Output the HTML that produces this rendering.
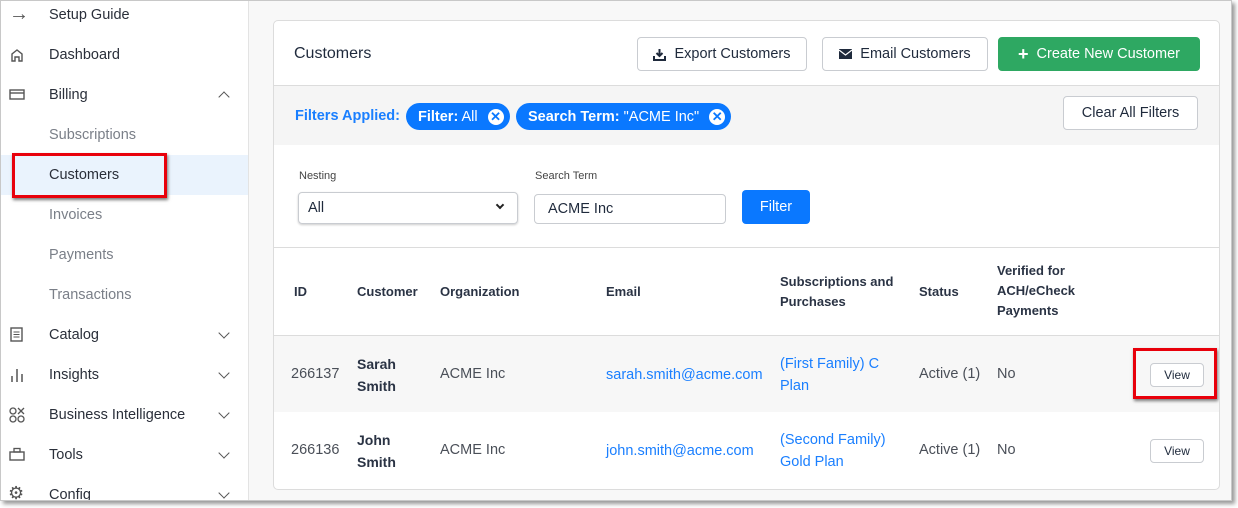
<!DOCTYPE html>
<html><head><style>
*{box-sizing:border-box;margin:0;padding:0}
body{width:1238px;height:508px;background:#fff;font-family:"Liberation Sans",sans-serif;position:relative;overflow:hidden;color:#1f2a3c}
.a{position:absolute;white-space:nowrap}
.frame{position:absolute;left:0;top:0;width:1232px;height:501px;border:1px solid #c8c8c8;box-shadow:3px 3px 4px #999;overflow:hidden;background:#f8f8f8}
.side{position:absolute;left:-1px;top:0;width:249px;height:502px;background:#fff;border-right:1px solid #e3e3e3}
.nav{font-size:14.5px;color:#2a2f3a}
.sub{font-size:14.5px;color:#7a7f88}
.chev{position:absolute;width:8px;height:8px;border-right:1.5px solid #555;border-bottom:1.5px solid #555;transform:rotate(45deg)}
.card{position:absolute;left:272px;top:19px;width:947px;height:470px;background:#fff;border:1px solid #dcdcdc;border-radius:5px;overflow:hidden}
.btn{position:absolute;border:1px solid #c9ccd1;border-radius:4px;background:#fff;font-size:14.5px;color:#1f2a3c;display:flex;align-items:center;justify-content:center;gap:8px}
.th{font-size:13px;font-weight:bold;color:#2a3344;line-height:20px}
.td{font-size:14.5px;color:#4a4f58}
.lnk{font-size:14.5px;color:#1a7fff;line-height:22px}
.pill{position:absolute;background:#0a78ff;color:#fff;border-radius:14px;height:27px;top:102px;font-size:14.5px;display:flex;align-items:center;padding:0 6px 0 12px;gap:10px}
.x{width:16px;height:16px;border-radius:50%;background:#fff;color:#0a78ff;font-size:13px;font-weight:bold;display:flex;align-items:center;justify-content:center;line-height:1}
</style></head><body>
<div class="frame">
<div class="side">
 <div class="a nav" style="left:9px;top:2px;font-size:20px;color:#555">→</div>
 <div class="a nav" style="left:49px;top:6px">Setup Guide</div>
 <svg class="a" style="left:10px;top:47px" width="14" height="14" viewBox="0 0 14 14"><path d="M2 13V6L7 2l5 4v7H9V9H5v4z" fill="none" stroke="#555" stroke-width="1.4"/></svg>
 <div class="a nav" style="left:49px;top:46px">Dashboard</div>
 <svg class="a" style="left:9px;top:88px" width="16" height="12"><rect x="1" y="1" width="14" height="9" fill="none" stroke="#555" stroke-width="1.4"/><line x1="1" y1="4" x2="15" y2="4" stroke="#555" stroke-width="1.4"/></svg>
 <div class="a nav" style="left:49px;top:86px">Billing</div>
 <div class="chev" style="left:220px;top:92px;transform:rotate(225deg)"></div>
 <div class="a sub" style="left:49px;top:126px">Subscriptions</div>
 <div class="a" style="left:0;top:154px;width:248px;height:40px;background:#eaf3fd"></div>
 <div class="a" style="left:12px;top:152px;width:155px;height:45px;border:3px solid #e8000b;box-shadow:1px 2px 3px #777"></div>
 <div class="a nav" style="left:49px;top:166px">Customers</div>
 <div class="a sub" style="left:49px;top:206px">Invoices</div>
 <div class="a sub" style="left:49px;top:246px">Payments</div>
 <div class="a sub" style="left:49px;top:286px">Transactions</div>
 <svg class="a" style="left:10px;top:326px" width="13" height="15"><rect x="1" y="1" width="11" height="13" fill="none" stroke="#555" stroke-width="1.4"/><path d="M3.5 5h6M3.5 7.5h6M3.5 10h6" stroke="#555"/></svg>
 <div class="a nav" style="left:49px;top:326px">Catalog</div>
 <div class="chev" style="left:220px;top:328px"></div>
 <svg class="a" style="left:10px;top:366px" width="14" height="15"><path d="M2 15V9M7 15V2M12 15V7" stroke="#555" stroke-width="1.5"/></svg>
 <div class="a nav" style="left:49px;top:366px">Insights</div>
 <div class="chev" style="left:220px;top:368px"></div>
 <svg class="a" style="left:9px;top:406px" width="16" height="16"><circle cx="4" cy="4" r="3" fill="none" stroke="#555" stroke-width="1.3"/><circle cx="12" cy="12" r="3" fill="none" stroke="#555" stroke-width="1.3"/><circle cx="4" cy="12" r="3" fill="none" stroke="#555" stroke-width="1.3"/><path d="M9 1l6 6M15 1l-6 6" stroke="#555" stroke-width="1.3"/></svg>
 <div class="a nav" style="left:49px;top:406px">Business Intelligence</div>
 <div class="chev" style="left:220px;top:408px"></div>
 <svg class="a" style="left:9px;top:446px" width="16" height="14"><rect x="1" y="5" width="14" height="8" fill="none" stroke="#555" stroke-width="1.4"/><rect x="5" y="1.5" width="6" height="3.5" fill="none" stroke="#555" stroke-width="1.3"/></svg>
 <div class="a nav" style="left:49px;top:446px">Tools</div>
 <div class="chev" style="left:220px;top:448px"></div>
 <div class="a" style="left:8px;top:482px;font-size:18px;color:#555">⚙</div>
 <div class="a nav" style="left:49px;top:486px">Config</div>
 <div class="chev" style="left:220px;top:488px"></div>
</div>
<div class="card">
 <div class="a" style="left:20px;top:24px;font-size:16px;color:#1f2a3c">Customers</div>
 <div class="btn" style="left:363px;top:16px;width:170px;height:34px"><svg width="13" height="13"><path d="M6.5 1v7M3.5 5l3 3 3-3" stroke="#1f2a3c" stroke-width="2" fill="none"/><path d="M1 8v4h11V8" stroke="#1f2a3c" stroke-width="2" fill="none"/></svg>Export Customers</div>
 <div class="btn" style="left:548px;top:16px;width:166px;height:34px"><svg width="13" height="10"><rect width="13" height="10" fill="#1f2a3c"/><path d="M0 1l6.5 5L13 1" stroke="#fff" stroke-width="1.2" fill="none"/></svg>Email Customers</div>
 <div class="btn" style="left:724px;top:16px;width:202px;height:34px;background:#2ea862;border-color:#2ea862;color:#fff"><span style="font-size:18px;font-weight:bold">+</span>Create New Customer</div>
 <div class="a" style="left:0;top:64px;width:947px;height:60px;background:#f5f5f5;border-top:1px solid #dcdcdc"></div>
 <div class="a" style="left:21px;top:87px;font-size:14.5px;font-weight:bold;color:#1a7fff">Filters Applied:</div>
 <div class="pill" style="left:132px;top:82px"><span><b>Filter:</b> All</span><span class="x">✕</span></div>
 <div class="pill" style="left:242px;top:82px"><span><b>Search Term:</b> "ACME Inc"</span><span class="x">✕</span></div>
 <div class="btn" style="left:789px;top:75px;width:135px;height:34px">Clear All Filters</div>
 <div class="a" style="left:25px;top:149px;font-size:11px;color:#444">Nesting</div>
 <div class="a" style="left:24px;top:171px;width:220px;height:32px;border:1px solid #c9ccd1;border-radius:4px;box-shadow:0 1px 2px #ccc;font-size:14.5px;padding:7px 9px">All<div class="chev" style="left:198px;top:9px;width:6px;height:6px;border-color:#222;border-width:2px"></div></div>
 <div class="a" style="left:261px;top:149px;font-size:11px;color:#444">Search Term</div>
 <div class="a" style="left:260px;top:173px;width:192px;height:30px;border:1px solid #c9ccd1;border-radius:4px;font-size:14.5px;padding:6px 13px">ACME Inc</div>
 <div class="a" style="left:468px;top:169px;width:68px;height:34px;background:#0a78ff;border-radius:4px;color:#fff;font-size:14.5px;display:flex;align-items:center;justify-content:center">Filter</div>
 <div class="a" style="left:0;top:226px;width:947px;border-top:1px solid #dcdcdc"></div>
 <div class="a th" style="left:20px;top:261px">ID</div>
 <div class="a th" style="left:83px;top:261px">Customer</div>
 <div class="a th" style="left:166px;top:261px">Organization</div>
 <div class="a th" style="left:332px;top:261px">Email</div>
 <div class="a th" style="left:506px;top:251px">Subscriptions and<br>Purchases</div>
 <div class="a th" style="left:645px;top:261px">Status</div>
 <div class="a th" style="left:723px;top:240px">Verified for<br>ACH/eCheck<br>Payments</div>
 <div class="a" style="left:0;top:314px;width:947px;height:77px;background:#f7f7f7;border-top:1px solid #dcdcdc"></div>
 <div class="a td" style="left:17px;top:345px">266137</div>
 <div class="a th" style="left:83px;top:332px;font-size:14px;line-height:22px">Sarah<br>Smith</div>
 <div class="a td" style="left:166px;top:345px">ACME Inc</div>
 <div class="a lnk" style="left:332px;top:343px">sarah.smith@acme.com</div>
 <div class="a lnk" style="left:506px;top:332px">(First Family) C<br>Plan</div>
 <div class="a td" style="left:645px;top:345px">Active (1)</div>
 <div class="a td" style="left:723px;top:345px">No</div>
 <div class="btn" style="left:876px;top:342px;width:54px;height:24px;font-size:12px">View</div>
 <div class="a" style="left:859px;top:327px;width:84px;height:51px;border:3px solid #e8000b;box-shadow:1px 2px 3px #777"></div>
 <div class="a td" style="left:17px;top:421px">266136</div>
 <div class="a th" style="left:83px;top:408px;font-size:14px;line-height:22px">John<br>Smith</div>
 <div class="a td" style="left:166px;top:421px">ACME Inc</div>
 <div class="a lnk" style="left:332px;top:419px">john.smith@acme.com</div>
 <div class="a lnk" style="left:506px;top:408px">(Second Family)<br>Gold Plan</div>
 <div class="a td" style="left:645px;top:421px">Active (1)</div>
 <div class="a td" style="left:723px;top:421px">No</div>
 <div class="btn" style="left:876px;top:418px;width:54px;height:24px;font-size:12px">View</div>
</div>
</div>
</body></html>
